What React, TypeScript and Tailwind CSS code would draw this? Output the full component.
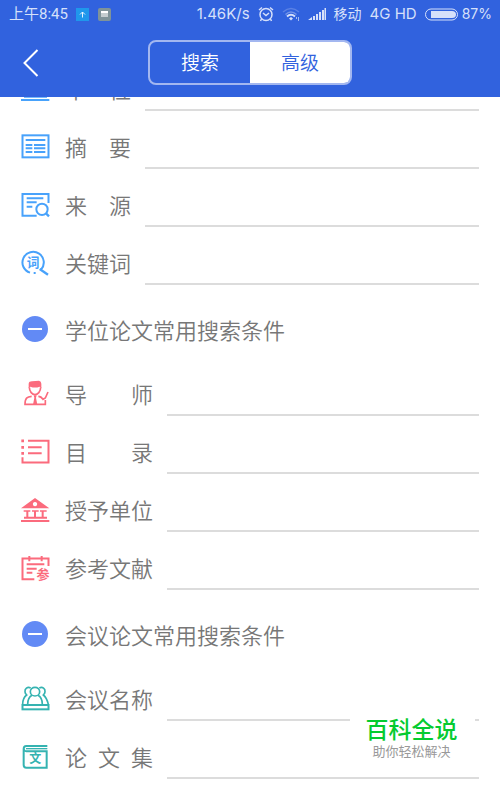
import { useState } from "react";
import type { ReactNode } from "react";

const Icon = ({ children }: { children: ReactNode }) => (
  <svg
    viewBox="0 0 84 84"
    className="w-7 h-7 shrink-0 overflow-visible"
    fill="none"
    stroke="currentColor"
    strokeWidth="6"
    aria-hidden="true"
  >
    {children}
  </svg>
);

const Glyph = ({ x, y, size, children }: { x: number; y: number; size: number; children: string }) => (
  <text
    x={x}
    y={y}
    fontSize={size}
    fontWeight="700"
    textAnchor="middle"
    fill="currentColor"
    stroke="none"
  >
    {children}
  </text>
);

const BankIcon = () => (
  <Icon>
    <path
      d="M0 37L42 6L85 37ZM42 18a6.500 6.500 0 1 0 0.100 0Z"
      fill="currentColor"
      fillRule="evenodd"
      stroke="none"
    />
    <path d="M8 45H28M33 45H53M57 45H77" strokeWidth="5" />
    <path d="M19 45V64M42 45V64M65 45V64" />
    <path d="M9 65H78M0 75H85" />
  </Icon>
);

const AbstractIcon = () => (
  <Icon>
    <rect x="4.500" y="7" width="78" height="66" />
    <path d="M14 21H73M14 36H34M39 36H73M14 46H34M39 46H73M14 57H34M39 57H73" />
  </Icon>
);

const SourceIcon = () => (
  <Icon>
    <path d="M47 74H4.500V9H82.500V36" />
    <path d="M17 22H67M17 34H47M17 47H34" />
    <circle cx="63" cy="55" r="17" />
    <path d="M75 67L84 76" strokeWidth="7" />
  </Icon>
);

const KeywordIcon = () => (
  <Icon>
    <path d="M60 62A32 32 0 1 0 27 71" />
    <path d="M38 72H44" />
    <path d="M56 60L81 77" strokeWidth="7" />
    <Glyph x={36} y={54} size={38}>
      词
    </Glyph>
  </Icon>
);

const TutorIcon = () => (
  <Icon>
    <path
      d="M23 24V11Q24 4 33 4L54 2Q61 3 61 11V24L56 20Q42 25 28 20Z"
      fill="currentColor"
      stroke="none"
    />
    <path d="M25 22C25 35 34 44 42 44C50 44 59 35 59 22" strokeWidth="5" />
    <path d="M32 49C18 50 12 54 12 73H73V60M52 49C58 49 61 50 66 58L73 54L81 36" strokeWidth="5" />
    <path d="M38 46H47L45 53L49 74H36L40 53Z" fill="currentColor" stroke="none" />
  </Icon>
);

const CatalogIcon = () => (
  <Icon>
    <path d="M21 8.500H82.500V73.500H4.500V58" />
    <path d="M21 28H62M21 46H62" />
    <path d="M1 8.500H9M1 28H9M1 46H9" strokeWidth="8" />
  </Icon>
);

const ReferenceIcon = () => (
  <Icon>
    <path d="M40 76H4.500V13.500H82.500V36" />
    <path d="M25 6V22M62 6V22" />
    <path d="M17 31H70M17 44H47M17 56H34" />
    <Glyph x={66} y={74} size={39}>
      参
    </Glyph>
  </Icon>
);

const MeetingIcon = () => (
  <Icon>
    <rect x="4.500" y="60" width="78" height="13" />
    <ellipse cx="42" cy="20" rx="14" ry="13" strokeWidth="5" />
    <path d="M33 31C24 36 20 46 20 58M51 31C60 36 64 46 64 58" strokeWidth="5" />
    <path d="M29 9C19 4 11 12 12 20C12 24 14 27 17 30C9 36 5 46 5 58" strokeWidth="5" />
    <path d="M55 9C65 4 73 12 72 20C72 24 70 27 67 30C75 36 79 46 82 58" strokeWidth="5" />
  </Icon>
);

const ProceedingsIcon = () => (
  <Icon>
    <path d="M79 9H16Q8 9 8 18V66Q8 74 16 74H77V25H16Q10 25 9 20" />
    <path d="M15 17H79" strokeWidth="4" />
    <Glyph x={43} y={61} size={36}>
      文
    </Glyph>
  </Icon>
);

type FieldProps = {
  id: string;
  label: string;
  icon: ReactNode;
  wide?: boolean;
};

const Field = ({ id, label, icon, wide }: FieldProps) => (
  <div className="flex items-center pt-[14px]">
    {icon}
    <label
      htmlFor={id}
      className={`${
        wide ? "w-[88px]" : "w-[66px]"
      } ml-4 mr-[14px] shrink-0 self-start leading-[42px] whitespace-nowrap [text-align-last:justify]`}
    >
      {label}
    </label>
    <input
      id={id}
      type="text"
      className="grow min-w-0 h-11 border-b-2 border-[#dcdcdc] bg-transparent focus:outline-none focus:border-[#3162de]"
    />
  </div>
);

type SectionProps = {
  title: string;
  color: string;
  children: ReactNode;
};

const Section = ({ title, color, children }: SectionProps) => {
  const [open, setOpen] = useState(true);

  return (
    <section>
      <h2 className="h-[73px] pt-[14px] flex items-center">
        <button
          type="button"
          aria-expanded={open}
          onClick={() => setOpen(!open)}
          className="flex items-center gap-4 leading-[30px]"
        >
          <svg viewBox="0 0 28 28" className="w-7 h-7" aria-hidden="true">
            <circle cx="14" cy="14" r="13" fill="#628af5" />
            <path d={open ? "M7 14H21" : "M7 14H21M14 7V21"} stroke="#fff" strokeWidth="2" />
          </svg>
          {title}
        </button>
      </h2>
      {open && <div className={color}>{children}</div>}
    </section>
  );
};

const StatusBar = () => (
  <div className="h-7 pl-[9px] pr-2 flex items-center justify-between text-[15px] leading-5 text-[#d6e0fa]">
    <div className="flex items-center">
      <span>上午8:45</span>
      <svg viewBox="0 0 13 13" className="w-[13px] h-[13px] ml-2" aria-hidden="true">
        <path d="M0 0H13V13H0Z" fill="#1f97ec" />
        <path d="M6.500 9.500V4M4 6.500L6.500 4L9 6.500" stroke="#e4f4ff" fill="none" />
      </svg>
      <svg viewBox="0 0 13 13" className="w-[13px] h-[13px] ml-[9px]" aria-hidden="true">
        <rect width="13" height="13" rx="2" fill="#7f9399" />
        <path d="M3 3H10V9H3Z" fill="#c5cdd0" />
        <path d="M3 3H10V5H3Z" fill="#fff" />
      </svg>
    </div>
    <div className="flex items-center gap-2 font-[Inter,'Noto_Sans_CJK_SC',sans-serif]">
      <span>1.46K/s</span>
      <svg
        viewBox="0 0 16 16"
        className="w-4 h-4"
        fill="none"
        stroke="currentColor"
        strokeWidth="1.500"
        aria-hidden="true"
      >
        <circle cx="8" cy="8.500" r="6" />
        <path d="M5 7L8 9.500L11 7M1 4L4 1.500M15 4L12 1.500M3.500 13L2.500 15M12.500 13L13.500 15" />
      </svg>
      <svg
        viewBox="0 0 18 14"
        className="w-[18px] h-[14px]"
        fill="none"
        stroke="currentColor"
        strokeWidth="1.500"
        aria-hidden="true"
      >
        <path d="M1 5Q9 -2 17 5" opacity="0.250" />
        <path d="M3.500 7.500Q9 2.500 14.500 7.500" opacity="0.400" />
        <path d="M5 9.500Q9 6 13 9.500" strokeWidth="2" />
        <path d="M7 11.500L9 13.500L11 11.500L9 10Z" fill="currentColor" stroke="none" />
        <path d="M14.500 10V12M16.500 10V14" strokeWidth="1" opacity="0.700" />
      </svg>
      <svg viewBox="0 0 18 12" className="w-[18px] h-3" fill="currentColor" aria-hidden="true">
        <path d="M0 12L4 9V12ZM5 8H7V12H5ZM8 6H10V12H8ZM11 4H13V12H11ZM14 2H16V12H14ZM16.500 0H18V12H16.500Z" />
      </svg>
      <span className="text-[14px]">移动</span>
      <span>4G HD</span>
      <div className="flex items-center gap-1">
        <svg viewBox="0 0 33 13" className="w-[33px] h-[13px]" aria-hidden="true">
          <rect x="0.500" y="1" width="32" height="11" rx="5.500" fill="none" stroke="currentColor" />
          <path d="M6 3H27Q31 3 31 6.500Q31 10 27 10H6Z" fill="currentColor" />
        </svg>
        <span className="text-[14px]">87%</span>
      </div>
    </div>
  </div>
);

const tabs = ["搜索", "高级"];

const Header = () => {
  const [active, setActive] = useState("高级");

  return (
    <header className="relative z-10 bg-[#3162de] font-[Roboto,'Noto_Sans_CJK_SC',sans-serif]">
      <StatusBar />
      <nav className="h-[69px] grid grid-cols-[1fr_204px_1fr] items-center">
        <button type="button" aria-label="返回" className="ml-[22px] w-[18px]">
          <svg
            viewBox="0 0 18 28"
            className="w-[18px] h-7"
            fill="none"
            stroke="#fff"
            strokeWidth="2"
            aria-hidden="true"
          >
            <path d="M15.500 1L2.500 14L15.500 27" />
          </svg>
        </button>
        <div className="h-[45px] grid grid-cols-2 rounded-lg border-2 border-[#a3b7f0] overflow-hidden">
          {tabs.map((tab) => (
            <button
              key={tab}
              type="button"
              onClick={() => setActive(tab)}
              className={`pt-[2px] text-[19px] leading-6 font-[350] ${
                tab === active ? "bg-white text-[#3162de]" : "text-white"
              }`}
            >
              {tab}
            </button>
          ))}
        </div>
      </nav>
    </header>
  );
};

const App = () => (
  <div className="relative min-h-screen overflow-hidden bg-white font-['Noto_Sans_CJK_SC',sans-serif]">
    <Header />
    <main className="-mt-[44px] px-[21px] text-[22px] text-[#777777] font-[350]">
      <div className="text-[#48a2fb] [&_label]:text-[#777777]">
        <Field id="unit" label="单位" icon={<BankIcon />} />
        <Field id="abstract" label="摘要" icon={<AbstractIcon />} />
        <Field id="source" label="来源" icon={<SourceIcon />} />
        <Field id="keyword" label="关键词" icon={<KeywordIcon />} />
      </div>
      <Section title="学位论文常用搜索条件" color="text-[#fb6b7d] [&_label]:text-[#777777]">
        <Field id="tutor" label="导师" icon={<TutorIcon />} wide />
        <Field id="catalog" label="目录" icon={<CatalogIcon />} wide />
        <Field id="awarder" label="授予单位" icon={<BankIcon />} wide />
        <Field id="reference" label="参考文献" icon={<ReferenceIcon />} wide />
      </Section>
      <Section title="会议论文常用搜索条件" color="text-[#35b3b1] [&_label]:text-[#777777]">
        <Field id="meeting" label="会议名称" icon={<MeetingIcon />} wide />
        <Field id="proceedings" label="论文集" icon={<ProceedingsIcon />} wide />
      </Section>
    </main>
    <div className="absolute right-[25px] bottom-[20px] w-[125px] h-[60px] pr-[2px] flex flex-col items-center justify-center bg-white font-['Liberation_Sans','Noto_Sans_CJK_SC',sans-serif]">
      <strong className="text-[23px] leading-6 font-medium text-[#05cb30]">百科全说</strong>
      <span className="text-[13px] leading-5 text-[#999999]">助你轻松解决</span>
    </div>
  </div>
);

export default App;
